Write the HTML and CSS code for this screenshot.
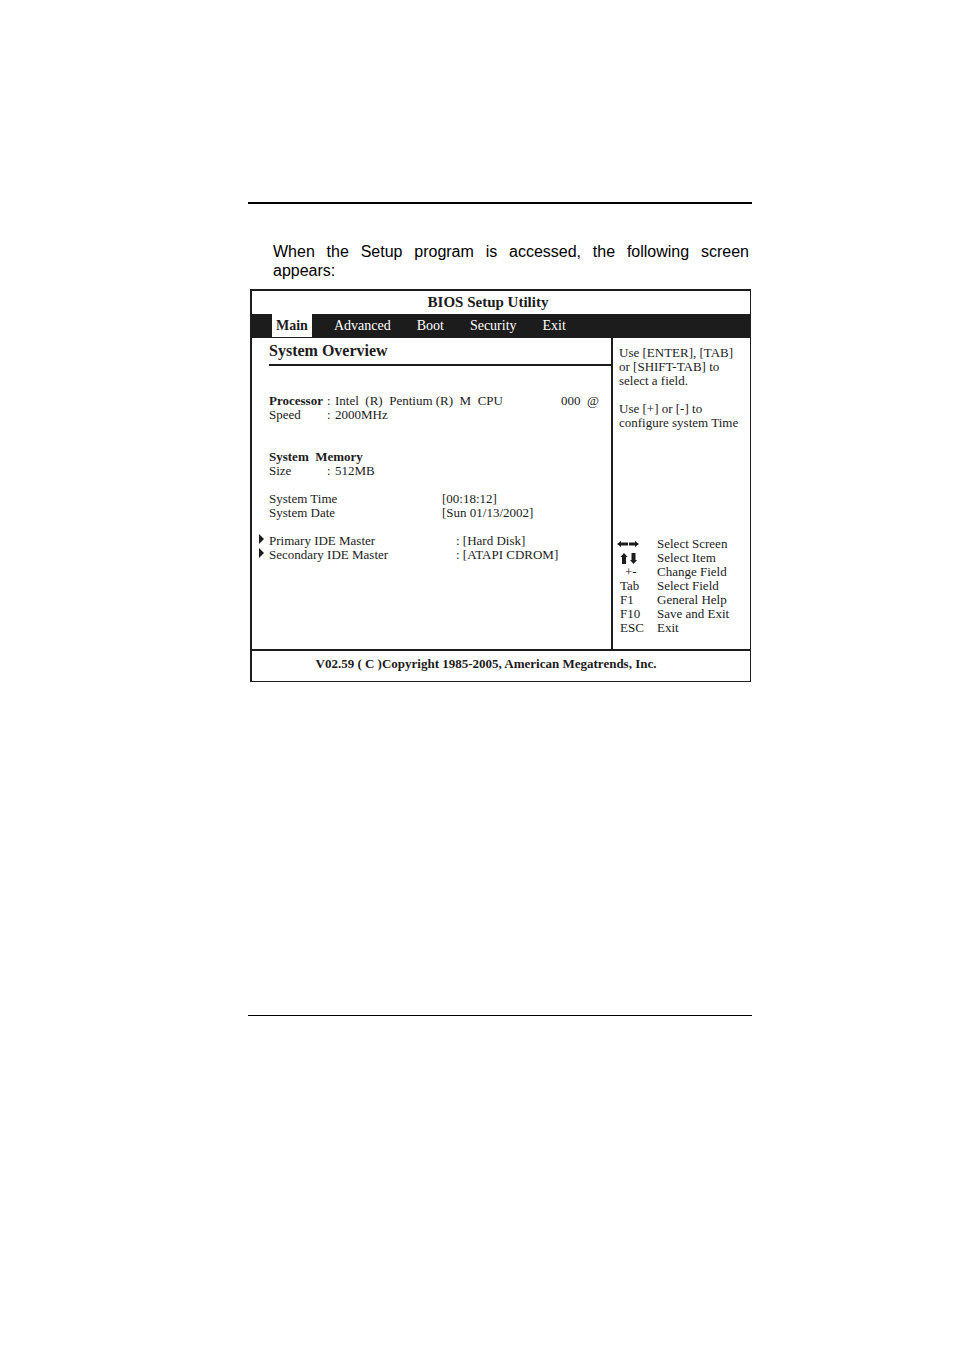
FILE: index.html
```
<!DOCTYPE html>
<html lang="en">
    <head>
        <meta charset="utf-8">
        <title>BIOS Setup Utility</title>
        <link rel="stylesheet" href="styles.css">
    </head>
    <body>
        <main class="page">
            <p class="intro">When the Setup program is accessed, the following screen appears:</p>
            <div class="bios">
                <h1 class="bios-title">BIOS Setup Utility</h1>
                <nav class="tabs">
                    <a class="tab active" href="#main">Main</a>
                    <a class="tab" href="#advanced">Advanced</a>
                    <a class="tab" href="#boot">Boot</a>
                    <a class="tab" href="#security">Security</a>
                    <a class="tab" href="#exit">Exit</a>
                </nav>
                <div class="bios-body">
                    <section class="overview" id="main">
                        <h2 class="overview-title">System Overview</h2>
                        <div class="group">
                            <div class="row">
                                <strong>Processor</strong><span>:</span>
                                <span class="cpu"><span>Intel&nbsp; (R)&nbsp; Pentium (R)&nbsp; M&nbsp; CPU</span><span>000&nbsp; @</span></span>
                            </div>
                            <div class="row"><span>Speed</span><span>:</span><span>2000MHz</span></div>
                        </div>
                        <div class="group">
                            <strong>System&nbsp; Memory</strong>
                            <div class="row"><span>Size</span><span>:</span><span>512MB</span></div>
                        </div>
                        <div class="group fields">
                            <div class="field"><label for="time">System Time</label><input id="time" type="text" value="[00:18:12]"></div>
                            <div class="field"><label for="date">System Date</label><input id="date" type="text" value="[Sun 01/13/2002]"></div>
                        </div>
                        <div class="group devices">
                            <div class="device"><a href="#primary">Primary IDE Master</a><span>: [Hard Disk]</span></div>
                            <div class="device"><a href="#secondary">Secondary IDE Master</a><span>: [ATAPI CDROM]</span></div>
                        </div>
                    </section>
                    <aside class="help">
                        <div>
                            <p>Use [ENTER], [TAB]<br>or [SHIFT-TAB] to<br>select a field.</p>
                            <p>Use [+] or [-] to<br>configure system Time</p>
                        </div>
                        <dl class="keys">
                            <dt class="arrows">
                                <svg width="24" height="14" viewBox="0 0 24 14" role="img" aria-label="Left and right arrows">
                                    <path d="M0 7l4-3v1.500h7v3H4V10zM22 7l-4-3v1.500h-6v3h6V10z"/>
                                </svg>
                            </dt>
                            <dd>Select Screen</dd>
                            <dt class="arrows">
                                <svg width="24" height="14" viewBox="0 0 24 14" role="img" aria-label="Up and down arrows">
                                    <path d="M7 2l3.500 4H9v7H5V6H3.500zM16.500 13l3.500-4h-1.500V2h-4v7H13z"/>
                                </svg>
                            </dt>
                            <dd>Select Item</dd>
                            <dt class="plus">+-</dt><dd>Change Field</dd>
                            <dt>Tab</dt><dd>Select Field</dd>
                            <dt>F1</dt><dd>General Help</dd>
                            <dt>F10</dt><dd>Save and Exit</dd>
                            <dt>ESC</dt><dd>Exit</dd>
                        </dl>
                    </aside>
                </div>
                <div class="copyright">V02.59 ( C )Copyright 1985-2005, American Megatrends, Inc.</div>
            </div>
        </main>
    </body>
</html>
```
FILE: styles.css
```
* {
    box-sizing: border-box;
}
body {
    margin: 0;
    background: #fff;
    color: #000;
}
h1, h2, p, dl, dd {
    margin: 0;
}

.page {
    margin: 202px 202px 0 248px;
    padding-bottom: 333px;
    border-top: 2px solid #000;
    border-bottom: 1px solid #000;
}
.intro {
    padding: 38px 3px 0 25px;
    font-family: "Liberation Sans", Arial, sans-serif;
    font-size: 16px;
    line-height: 19px;
    text-align: justify;
}

.bios {
    margin: 9px 1px 0 2px;
    border: 2px solid #1c1c1c;
    border-right-width: 1px;
    border-bottom-width: 1px;
    color: #1c1c1c;
    font-family: "Liberation Serif", "Times New Roman", serif;
    font-size: 13px;
    line-height: 14px;
}
.bios-title {
    font-size: 15px;
    line-height: 23px;
    text-align: center;
    padding-right: 26px;
}

.tabs {
    display: flex;
    gap: 18px;
    padding-left: 20px;
    background: #1c1c1c;
    font-size: 14px;
    line-height: 23px;
}
.tab {
    padding: 0 4px;
    margin-bottom: 1px;
    color: #fff;
    text-decoration: none;
}
.tab.active {
    background: #fff;
    color: #1c1c1c;
    font-weight: bold;
}

.bios-body {
    display: grid;
    grid-template-columns: 1fr 139px;
}
.overview {
    padding-left: 17px;
}
.overview-title {
    font-size: 16px;
    line-height: 26px;
    margin-bottom: 28px;
    border-bottom: 2px solid #1c1c1c;
}
.group {
    margin-bottom: 28px;
}
.row {
    display: grid;
    grid-template-columns: 58px 8px 1fr;
}
.cpu {
    display: flex;
    justify-content: space-between;
    padding-right: 12px;
}
.fields,
.group:has(+ .fields) {
    margin-bottom: 14px;
}
.devices {
    margin-bottom: 87px;
}
.field {
    display: grid;
    grid-template-columns: 173px 1fr;
}
.field input {
    min-width: 0;
    height: 14px;
    padding: 0;
    border: 0;
    background: none;
    color: inherit;
    font: inherit;
}
.device {
    position: relative;
    display: grid;
    grid-template-columns: 187px 1fr;
}
.device::before {
    content: "";
    position: absolute;
    left: -10px;
    top: 0;
    border: 5px solid transparent;
    border-left-color: #1c1c1c;
    border-right-width: 0;
}
.device a {
    color: inherit;
    text-decoration: none;
}

.help {
    display: flex;
    flex-direction: column;
    justify-content: space-between;
    padding: 8px 0 14px 6px;
    border-left: 2px solid #1c1c1c;
}
.help p {
    margin-bottom: 14px;
    white-space: nowrap;
}
.keys {
    display: grid;
    grid-template-columns: 37px 1fr;
    padding-left: 1px;
}
.keys dt,
.keys dd {
    height: 14px;
}
.arrows svg {
    display: block;
    margin-left: -3px;
    fill: #1c1c1c;
}
.plus {
    padding-left: 5px;
}

.copyright {
    border-top: 2px solid #1c1c1c;
    padding: 0 30px 4px 0;
    font-weight: bold;
    line-height: 26px;
    text-align: center;
}
```
